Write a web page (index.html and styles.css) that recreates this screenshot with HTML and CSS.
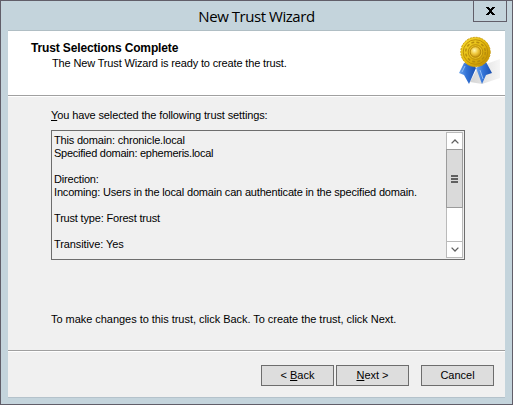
FILE: index.html
```html
<!DOCTYPE html>
<html lang="en">
<head>
    <meta charset="UTF-8">
    <meta name="viewport" content="width=device-width, initial-scale=1.0">
    <title>New Trust Wizard</title>
    <link rel="stylesheet" href="styles.css">
</head>
<body>
    <div class="window">
        <div class="titlebar">
            <span class="title">New Trust Wizard</span>
            <button class="close-btn" aria-label="Close">
                <svg width="9" height="8" viewBox="0 0 9 8" shape-rendering="crispEdges">
                    <path d="M0 0h3v1h-3zM6 0h3v1h-3zM1 1h3v1h-3zM5 1h3v1h-3zM2 2h5v1h-5zM3 3h3v2h-3zM2 5h5v1h-5zM1 6h3v1h-3zM5 6h3v1h-3zM0 7h3v1h-3zM6 7h3v1h-3z"/>
                </svg>
            </button>
        </div>

        <div class="content">
            <div class="header">
                <div class="header-text">
                    <h1>Trust Selections Complete</h1>
                    <p>The New Trust Wizard is ready to create the trust.</p>
                </div>
                <svg class="medal" width="44" height="50" viewBox="0 0 44 50">
                    <defs>
                        <linearGradient id="gold" x1="0" y1="0" x2="1" y2="1">
                            <stop offset="0" stop-color="#f8dc35"/>
                            <stop offset=".5" stop-color="#e3b910"/>
                            <stop offset="1" stop-color="#b98500"/>
                        </linearGradient>
                        <radialGradient id="core" cx=".4" cy=".35" r=".7">
                            <stop offset="0" stop-color="#fff6b0"/>
                            <stop offset=".5" stop-color="#efc83c"/>
                            <stop offset="1" stop-color="#c08c08"/>
                        </radialGradient>
                        <linearGradient id="ribbon" x1="0" y1="0" x2="1" y2="0">
                            <stop offset="0" stop-color="#6ba4ee"/>
                            <stop offset=".45" stop-color="#3272d6"/>
                            <stop offset="1" stop-color="#1b50b0"/>
                        </linearGradient>
                        <linearGradient id="shade" x1="0" y1="0" x2="1" y2="0">
                            <stop offset="0" stop-color="#d4d4d4"/>
                            <stop offset="1" stop-color="#f6f6f6"/>
                        </linearGradient>
                    </defs>
                    <path fill="url(#shade)" d="M12 46L20 31 42 23V42L24 48z"/>
                    <path fill="url(#ribbon)" d="M6 27L1 37 6 39 11 48 18 32 15 28z"/>
                    <path fill="url(#ribbon)" d="M18 32L24 48 28 39 34 37 28 26z"/>
                    <path fill="none" stroke="#8dbbf5" d="M7 30L4 36M22 34l3 9"/>
                    <circle cx="17.5" cy="16" r="14.7" fill="url(#gold)" stroke="#c99a08" stroke-dasharray="2 1"/>
                    <circle cx="17.5" cy="16" r="12.3" fill="none" stroke="#b98b05" stroke-width=".9"/>
                    <circle cx="17.5" cy="16" r="9.8" fill="none" stroke="#b78d0c" stroke-width="1.4" stroke-dasharray="3 2.2"/>
                    <circle cx="17.5" cy="16" r="7.3" fill="#e7bd20" stroke="#b08408" stroke-width=".8"/>
                    <circle cx="17.5" cy="16" r="5.3" fill="url(#core)" stroke="#a67a02" stroke-width=".7"/>
                </svg>
            </div>

            <div class="main">
                <label class="settings-label"><u>Y</u>ou have selected the following trust settings:</label>
                <div class="settings">
                    <div class="settings-text">
                        <div>This domain: chronicle.local</div>
                        <div class="specified">Specified domain: ephemeris.local</div>
                        <br>
                        <div>Direction:</div>
                        <div>Incoming: Users in the local domain can authenticate in the specified domain.</div>
                        <br>
                        <div>Trust type: Forest trust</div>
                        <br>
                        <div class="transitive">Transitive: Yes</div>
                    </div>
                    <div class="scrollbar">
                        <div class="arrow up">
                            <svg width="8" height="5" viewBox="0 0 8 5"><path d="M.6 4.4L4 1l3.4 3.4"/></svg>
                        </div>
                        <div class="thumb"><i></i><i></i><i></i></div>
                        <div class="arrow down">
                            <svg width="8" height="5" viewBox="0 0 8 5"><path d="M.6.6L4 4 7.4.6"/></svg>
                        </div>
                    </div>
                </div>
                <p class="hint">To make changes to this trust, click Back. To create the trust, click Next.</p>
            </div>

            <div class="footer">
                <button class="btn"><span>&lt; <u>B</u>ack</span></button>
                <button class="btn"><span><u>N</u>ext &gt;</span></button>
                <button class="btn cancel"><span>Cancel</span></button>
            </div>
        </div>
    </div>
</body>
</html>
```
FILE: styles.css
```css
* {
    box-sizing: border-box;
}

body {
    margin: 0;
    font-family: "Liberation Sans", Arial, sans-serif;
    font-size: 11px;
    line-height: 13px;
    color: #000;
}

h1,
p {
    margin: 0;
}

u {
    text-underline-offset: 1px;
    text-decoration-thickness: 1px;
    text-decoration-skip-ink: none;
}

.window {
    width: 513px;
    height: 405px;
    padding: 0 7px;
    border: 1px solid #615e69;
    background-color: #c4d4dc;
}

.titlebar {
    position: relative;
    height: 29px;
    display: flex;
    justify-content: center;
}

.title {
    font-family: "Open Sans", sans-serif;
    font-size: 15px;
    line-height: 30px;
    letter-spacing: -0.45px;
}

.close-btn {
    position: absolute;
    top: 0;
    right: -2px;
    width: 34px;
    height: 21px;
    padding: 0;
    display: flex;
    justify-content: center;
    align-items: center;
    background: none;
    border: 1px solid #615e69;
    border-top: 0;
}

.content {
    height: 368px;
    display: flex;
    flex-direction: column;
    border-top: 1px solid #b0bec4;
    border-bottom: 1px solid #b4c2cb;
    background-color: #f0f0f0;
}

.header {
    height: 66px;
    display: flex;
    justify-content: space-between;
    padding: 5px 3px 0 23px;
    background-color: #fff;
    border-bottom: 1px solid #fff;
    box-shadow: inset 0 -1px #a0a0a0;
}

.header-text {
    padding-top: 6px;
}

.header h1 {
    font-size: 12px;
    line-height: 13px;
    font-weight: bold;
    letter-spacing: -0.14px;
}

.header p {
    margin-top: 2px;
    padding-left: 21px;
    letter-spacing: -0.15px;
}

.main {
    flex: 1;
    padding: 12px 40px 0 43px;
}

.settings-label {
    display: block;
    letter-spacing: -0.12px;
}

.settings {
    height: 130px;
    margin-top: 8px;
    padding: 1px;
    display: flex;
    justify-content: space-between;
    border: 1px solid #6d6d6d;
}

.settings-text {
    padding: 2px 0 0 1px;
    white-space: nowrap;
    letter-spacing: -0.18px;
}

.specified {
    letter-spacing: -0.25px;
}

.transitive {
    letter-spacing: -0.1px;
}

.scrollbar {
    width: 17px;
    display: flex;
    flex-direction: column;
    background-color: #fff;
    border: 1px solid #bababa;
}

.arrow {
    height: 16px;
    display: flex;
    justify-content: center;
    align-items: center;
}

.arrow path {
    fill: none;
    stroke: #606060;
    stroke-width: 1.3;
}

.down {
    margin-top: auto;
    border-top: 1px solid #bababa;
}

.thumb {
    height: 59px;
    margin: 0 -1px;
    display: flex;
    flex-direction: column;
    align-items: center;
    justify-content: center;
    gap: 1px;
    background-color: #dadada;
    border: 1px solid #9b9b9b;
}

.thumb i {
    width: 7px;
    height: 2px;
    background-color: #606060;
}

.hint {
    margin-top: 53px;
    letter-spacing: -0.04px;
}

.footer {
    height: 47px;
    display: flex;
    justify-content: flex-end;
    gap: 2px;
    padding: 14px 11px 0 0;
    border-top: 1px solid #a0a0a0;
    box-shadow: inset 0 1px #fff;
}

.btn {
    width: 73px;
    height: 21px;
    padding: 0;
    font: inherit;
    color: inherit;
    background-color: #dddddd;
    border: 1px solid #6d6d6d;
}

.cancel {
    margin-left: 10px;
}
```
